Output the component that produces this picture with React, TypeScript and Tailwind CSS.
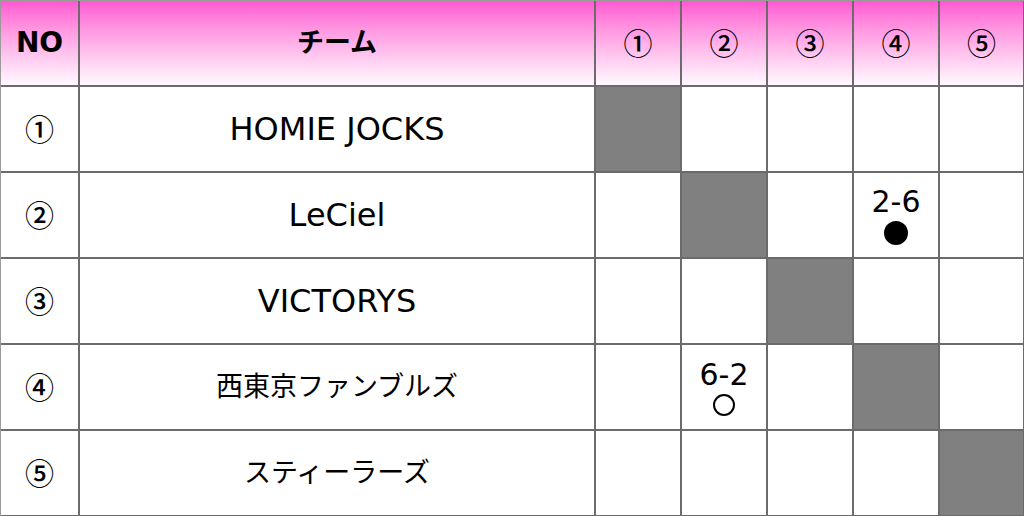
const font = { fontFamily: '"DejaVu Sans", "Noto Sans CJK JP", sans-serif' };
const cjk = { fontFamily: '"Noto Sans CJK JP", sans-serif' };

const teams = [
  { name: "HOMIE JOCKS", size: "text-[32px]" },
  { name: "LeCiel", size: "text-[32px]" },
  { name: "VICTORYS", size: "text-[32px]" },
  { name: "西東京ファンブルズ", size: "text-[27px]" },
  { name: "スティーラーズ", size: "text-[27px]" },
];
const nums = ["①", "②", "③", "④", "⑤"];

// results[row-col]
const results: Record<string, { score: string; win: boolean }> = {
  "1-3": { score: "2-6", win: false },
  "3-1": { score: "6-2", win: true },
};

const cell = "flex items-center justify-center border-r-2 border-b-2 border-[#6b6b6b]";
const head = "bg-gradient-to-b from-[#ff58d2] to-[#fffafe] text-black";

export default function App() {
  return (
    <div
      className="grid w-[1024px] h-[516px] grid-cols-[79px_516px_86px_86px_86px_86px_85px] grid-rows-[86px_86px_86px_86px_86px_86px] bg-white text-black border-l border-t border-[#9a9a9a]"
      style={font}
    >
      <div className={`${cell} ${head} text-[28px] font-bold`}>NO</div>
      <div className={`${cell} ${head} text-[27px] font-bold`}>チーム</div>
      {nums.map(n => (
        <div key={n} className={`${cell} ${head} text-[29px] font-medium`} style={cjk}>{n}</div>
      ))}

      {teams.map((t, r) => (
        <>
          <div key={`n${r}`} className={`${cell} text-[29px] font-medium`} style={cjk}>{nums[r]}</div>
          <div key={`t${r}`} className={`${cell} ${t.size}`}>{t.name}</div>
          {nums.map((_, c) => {
            if (r === c) return <div key={`c${r}${c}`} className={`${cell} bg-[#808080]`} />;
            const res = results[`${r}-${c}`];
            return (
              <div key={`c${r}${c}`} className={`${cell} flex-col text-[30px] leading-[34px]`}>
                {res && (
                  <>
                    <span>{res.score}</span>
                    <span
                      className={`mt-[2px] rounded-full border-2 border-black ${res.win ? "w-[22px] h-[22px] bg-white" : "w-[24px] h-[24px] bg-black"}`}
                    />
                  </>
                )}
              </div>
            );
          })}
        </>
      ))}
    </div>
  );
}
